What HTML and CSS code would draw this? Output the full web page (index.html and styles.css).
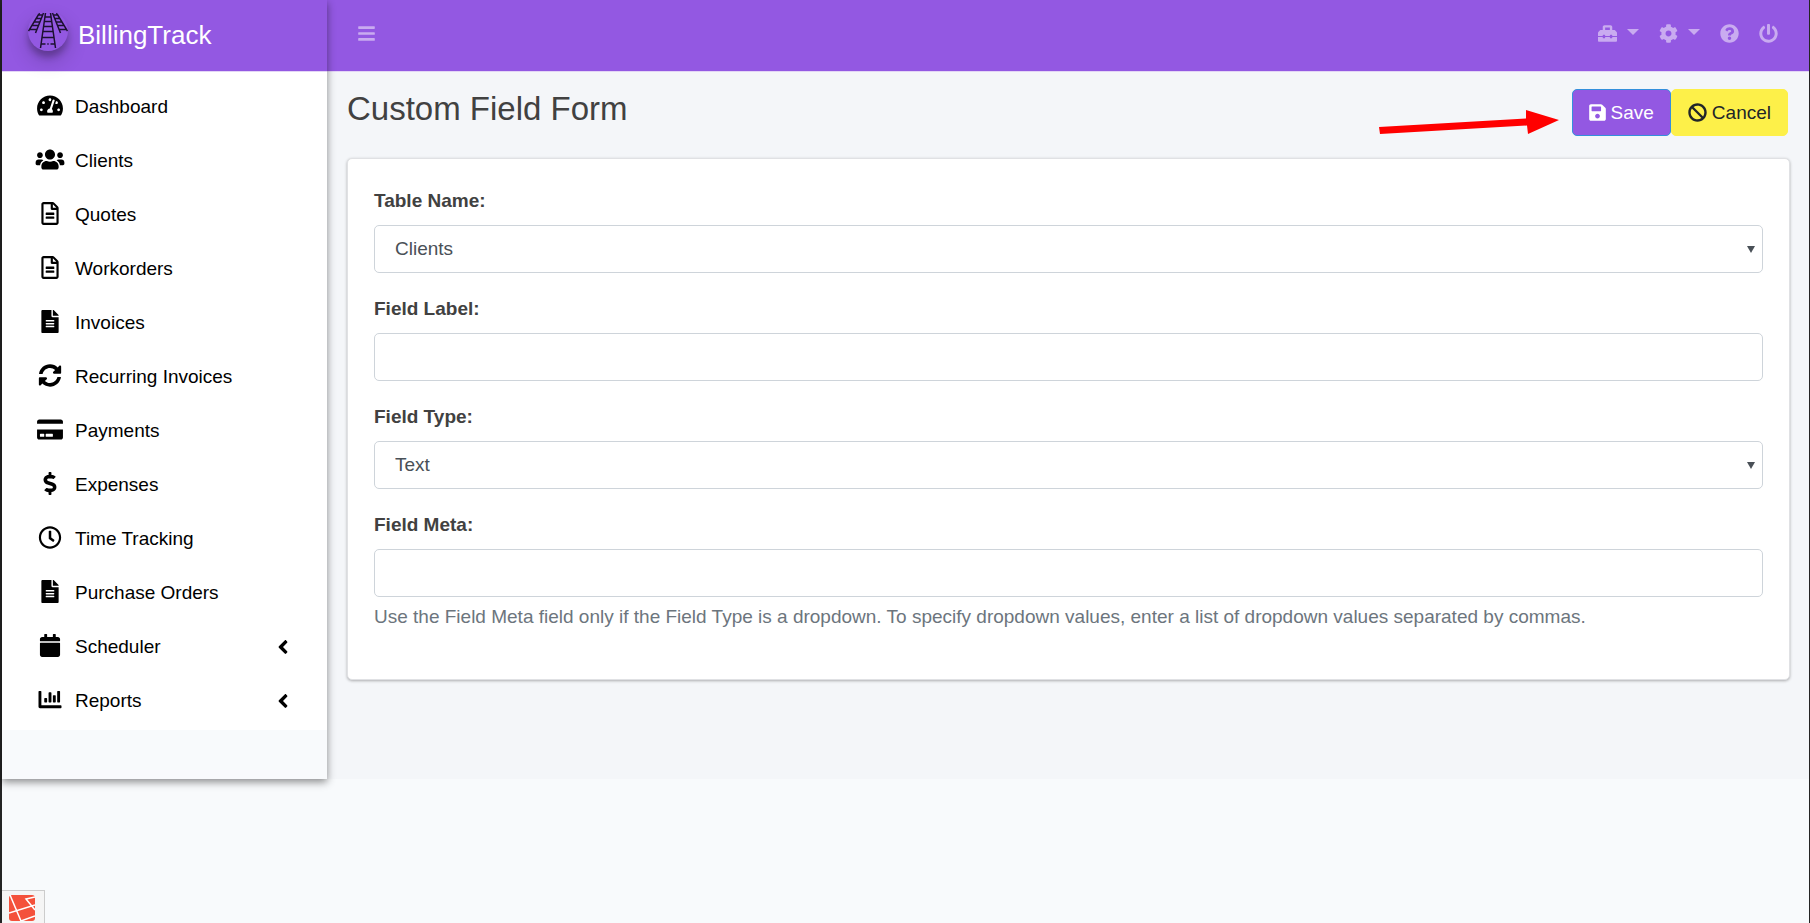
FILE: index.html
```
<!DOCTYPE html>
<html lang="en">
<head>
<meta charset="utf-8">
<meta name="viewport" content="width=device-width, initial-scale=1">
<title>BillingTrack - Custom Field Form</title>
<link rel="stylesheet" href="styles.css">
</head>
<body>
<svg class="sprite" aria-hidden="true">
  <symbol id="i-dash" viewBox="0 0 576 512"><path d="M288 32C128.94 32 0 160.94 0 320c0 52.8 14.25 102.26 39.06 144.8 5.61 9.62 16.3 15.2 27.44 15.2h443c11.14 0 21.83-5.58 27.44-15.2C561.75 422.26 576 372.8 576 320c0-159.06-128.94-288-288-288zm0 64c14.71 0 26.58 10.13 30.32 23.65-1.11 2.26-2.64 4.23-3.45 6.67l-9.22 27.67c-5.13 3.49-10.97 6.01-17.64 6.01-17.67 0-32-14.33-32-32S270.33 96 288 96zM96 384c-17.67 0-32-14.33-32-32s14.33-32 32-32 32 14.33 32 32-14.33 32-32 32zm48-160c-17.67 0-32-14.33-32-32s14.33-32 32-32 32 14.33 32 32-14.33 32-32 32zm246.77-72.41l-61.33 184C343.13 347.33 352 364.54 352 384c0 11.72-3.38 22.55-8.88 32H232.88c-5.5-9.45-8.88-20.28-8.88-32 0-33.94 26.5-61.43 59.9-63.59l61.34-184.01c4.17-12.56 17.73-19.45 30.36-15.17 12.57 4.19 19.35 17.79 15.17 30.36zm14.66 57.2l15.52-46.55c3.47-1.29 7.13-2.23 11.05-2.23 17.67 0 32 14.33 32 32s-14.33 32-32 32c-11.38-.01-20.89-6.28-26.57-15.22zM480 384c-17.67 0-32-14.33-32-32s14.33-32 32-32 32 14.33 32 32-14.33 32-32 32z"/></symbol>
  <symbol id="i-users" viewBox="0 0 640 512"><path d="M96 224c35.3 0 64-28.7 64-64s-28.7-64-64-64-64 28.7-64 64 28.7 64 64 64zm448 0c35.3 0 64-28.7 64-64s-28.7-64-64-64-64 28.7-64 64 28.7 64 64 64zm32 32h-64c-17.6 0-33.5 7.1-45.1 18.6 40.3 22.1 68.9 62 75.1 109.4h66c17.7 0 32-14.3 32-32v-32c0-35.3-28.7-64-64-64zm-256 0c61.9 0 112-50.1 112-112S381.9 32 320 32 208 82.1 208 144s50.1 112 112 112zm76.8 32h-8.3c-20.8 10-43.9 16-68.5 16s-47.6-6-68.5-16h-8.3C179.6 288 128 339.6 128 403.2V432c0 26.5 21.5 48 48 48h288c26.5 0 48-21.5 48-48v-28.8c0-63.6-51.6-115.2-115.2-115.2zm-223.7-13.4C161.5 263.1 145.6 256 128 256H64c-35.3 0-64 28.7-64 64v32c0 17.7 14.3 32 32 32h65.9c6.3-47.4 34.9-87.3 75.2-109.4z"/></symbol>
  <symbol id="i-file-o" viewBox="0 0 384 512"><path d="M288 248v28c0 6.6-5.4 12-12 12H108c-6.6 0-12-5.4-12-12v-28c0-6.6 5.4-12 12-12h168c6.6 0 12 5.4 12 12zm-12 72H108c-6.6 0-12 5.4-12 12v28c0 6.6 5.4 12 12 12h168c6.6 0 12-5.4 12-12v-28c0-6.6-5.4-12-12-12zm108-188.1V464c0 26.5-21.5 48-48 48H48c-26.5 0-48-21.5-48-48V48C0 21.5 21.5 0 48 0h204.1C264.8 0 277 5.1 286 14.1L369.9 98c9 8.9 14.1 21.2 14.1 33.9zm-128-80V128h76.1L256 51.9zM336 464V176H232c-13.3 0-24-10.7-24-24V48H48v416h288z"/></symbol>
  <symbol id="i-file" viewBox="0 0 384 512"><path d="M224 136V0H24C10.7 0 0 10.7 0 24v464c0 13.3 10.7 24 24 24h336c13.3 0 24-10.7 24-24V160H248c-13.2 0-24-10.8-24-24zm64 236c0 6.6-5.4 12-12 12H108c-6.6 0-12-5.4-12-12v-8c0-6.6 5.4-12 12-12h168c6.6 0 12 5.4 12 12v8zm0-64c0 6.6-5.4 12-12 12H108c-6.6 0-12-5.4-12-12v-8c0-6.6 5.4-12 12-12h168c6.6 0 12 5.4 12 12v8zm0-72v8c0 6.6-5.4 12-12 12H108c-6.6 0-12-5.4-12-12v-8c0-6.6 5.4-12 12-12h168c6.6 0 12 5.4 12 12zm96-114.1v6.1H256V0h6.1c6.4 0 12.5 2.5 17 7l97.9 98c4.5 4.5 7 10.6 7 16.9z"/></symbol>
  <symbol id="i-sync" viewBox="0 0 512 512"><path d="M370.72 133.28C339.458 104.008 298.888 87.962 255.848 88c-77.458.068-144.328 53.178-162.791 126.85-1.344 5.363-6.122 9.15-11.651 9.15H24.103c-7.498 0-13.194-6.807-11.807-14.176C33.933 94.924 134.813 8 256 8c66.448 0 126.791 26.136 171.315 68.685L463.03 40.97C478.149 25.851 504 36.559 504 57.941V192c0 13.255-10.745 24-24 24H345.941c-21.382 0-32.09-25.851-16.971-40.971l41.75-41.749zM32 296h134.059c21.382 0 32.09 25.851 16.971 40.971l-41.75 41.75c31.262 29.273 71.835 45.319 114.876 45.28 77.418-.07 144.315-53.144 162.787-126.849 1.344-5.363 6.122-9.15 11.651-9.15h57.304c7.498 0 13.194 6.807 11.807 14.176C478.067 417.076 377.187 504 256 504c-66.448 0-126.791-26.136-171.315-68.685L48.97 471.03C33.851 486.149 8 475.441 8 454.059V320c0-13.255 10.745-24 24-24z"/></symbol>
  <symbol id="i-card" viewBox="0 0 576 512"><path d="M0 432c0 26.5 21.5 48 48 48h480c26.5 0 48-21.5 48-48V256H0v176zm192-68c0-6.6 5.4-12 12-12h136c6.6 0 12 5.4 12 12v40c0 6.6-5.4 12-12 12H204c-6.6 0-12-5.4-12-12v-40zm-128 0c0-6.6 5.4-12 12-12h72c6.6 0 12 5.4 12 12v40c0 6.6-5.4 12-12 12H76c-6.6 0-12-5.4-12-12v-40zM576 80v48H0V80c0-26.5 21.5-48 48-48h480c26.5 0 48 21.5 48 48z"/></symbol>
  <symbol id="i-dollar" viewBox="0 0 288 512"><path d="M209.2 233.4l-108-31.6C88.7 198.2 80 186.5 80 173.5c0-16.3 13.2-29.5 29.5-29.5h66.3c12.2 0 24.2 3.7 34.2 10.5 6.1 4.1 14.3 3.1 19.5-2l34.8-34c7.1-6.9 6.1-18.4-1.8-24.5C238 74.8 207.4 64.1 176 64V16c0-8.8-7.2-16-16-16h-32c-8.8 0-16 7.2-16 16v48h-2.5C45.8 64-5.4 118.7.5 183.6c4.2 46.1 39.4 83.6 83.8 96.6l102.5 30c12.5 3.7 21.2 15.3 21.2 28.3 0 16.3-13.2 29.5-29.5 29.5h-66.3C100 368 88 364.3 78 357.5c-6.1-4.1-14.3-3.1-19.5 2l-34.8 34c-7.1 6.9-6.1 18.4 1.8 24.5 24.5 19.2 55.1 29.9 86.5 30v48c0 8.8 7.2 16 16 16h32c8.8 0 16-7.2 16-16v-48.2c46.6-.9 90.3-28.6 105.7-72.7 21.5-61.6-14.6-124.8-72.5-141.7z"/></symbol>
  <symbol id="i-clock" viewBox="0 0 512 512"><path d="M256 8C119 8 8 119 8 256s111 248 248 248 248-111 248-248S393 8 256 8zm0 448c-110.5 0-200-89.5-200-200S145.5 56 256 56s200 89.5 200 200-89.5 200-200 200zm61.8-104.4l-84.9-61.7c-3.1-2.3-4.9-5.9-4.9-9.7V116c0-6.6 5.4-12 12-12h32c6.6 0 12 5.4 12 12v141.7l66.8 48.6c5.4 3.9 6.5 11.4 2.6 16.8L334.6 349c-3.9 5.3-11.4 6.5-16.8 2.6z"/></symbol>
  <symbol id="i-cal" viewBox="0 0 448 512"><path d="M12 192h424c6.6 0 12 5.4 12 12v260c0 26.5-21.5 48-48 48H48c-26.5 0-48-21.5-48-48V204c0-6.6 5.4-12 12-12zm436-44v-36c0-26.5-21.5-48-48-48h-48V12c0-6.6-5.4-12-12-12h-40c-6.6 0-12 5.4-12 12v52H160V12c0-6.6-5.4-12-12-12h-40c-6.6 0-12 5.4-12 12v52H48C21.5 64 0 85.5 0 112v36c0 6.6 5.4 12 12 12h424c6.6 0 12-5.4 12-12z"/></symbol>
  <symbol id="i-chart" viewBox="0 0 512 512"><path d="M332.8 320h38.4c6.4 0 12.8-6.4 12.8-12.8V172.8c0-6.4-6.4-12.8-12.8-12.8h-38.4c-6.4 0-12.8 6.4-12.8 12.8v134.4c0 6.4 6.4 12.8 12.8 12.8zm96 0h38.4c6.4 0 12.8-6.4 12.8-12.8V76.8c0-6.4-6.4-12.8-12.8-12.8h-38.4c-6.4 0-12.8 6.4-12.8 12.8v230.4c0 6.4 6.4 12.8 12.8 12.8zm-288 0h38.4c6.4 0 12.8-6.4 12.8-12.8v-70.4c0-6.4-6.4-12.8-12.8-12.8h-38.4c-6.4 0-12.8 6.4-12.8 12.8v70.4c0 6.4 6.4 12.8 12.8 12.8zm96 0h38.4c6.4 0 12.8-6.4 12.8-12.8V108.8c0-6.4-6.4-12.8-12.8-12.8h-38.4c-6.4 0-12.8 6.4-12.8 12.8v198.4c0 6.4 6.4 12.8 12.8 12.8zM496 384H64V80c0-8.84-7.16-16-16-16H16C7.16 64 0 71.16 0 80v336c0 17.67 14.33 32 32 32h464c8.84 0 16-7.16 16-16v-32c0-8.84-7.16-16-16-16z"/></symbol>
  <symbol id="i-left" viewBox="0 0 256 512"><path d="M31.7 239l136-136c9.4-9.4 24.6-9.4 33.9 0l22.6 22.6c9.4 9.4 9.4 24.6 0 33.9L127.9 256l96.4 96.4c9.4 9.4 9.4 24.6 0 33.9L201.7 409c-9.4 9.4-24.6 9.4-33.9 0l-136-136c-9.5-9.4-9.5-24.6-.1-34z"/></symbol>
  <symbol id="i-bars" viewBox="0 0 448 512"><path d="M16 132h416c8.837 0 16-7.163 16-16V76c0-8.837-7.163-16-16-16H16C7.163 60 0 67.163 0 76v40c0 8.837 7.163 16 16 16zm0 160h416c8.837 0 16-7.163 16-16v-40c0-8.837-7.163-16-16-16H16c-8.837 0-16 7.163-16 16v40c0 8.837 7.163 16 16 16zm0 160h416c8.837 0 16-7.163 16-16v-40c0-8.837-7.163-16-16-16H16c-8.837 0-16 7.163-16 16v40c0 8.837 7.163 16 16 16z"/></symbol>
  <symbol id="i-toolbox" viewBox="0 0 512 512"><path d="M502.63 214.63l-45.25-45.25c-6-6-14.14-9.37-22.63-9.37H384V80c0-26.51-21.49-48-48-48H176c-26.51 0-48 21.49-48 48v80H77.25c-8.49 0-16.62 3.37-22.63 9.37L9.37 214.63c-6 6-9.37 14.14-9.37 22.63V320h128v-16c0-8.84 7.16-16 16-16h32c8.84 0 16 7.16 16 16v16h128v-16c0-8.84 7.16-16 16-16h32c8.84 0 16 7.16 16 16v16h128v-82.75c0-8.48-3.37-16.62-9.37-22.62zM320 160H192V96h128v64zm64 208c0 8.84-7.16 16-16 16h-32c-8.84 0-16-7.16-16-16v-16H192v16c0 8.84-7.16 16-16 16h-32c-8.84 0-16-7.16-16-16v-16H0v96c0 17.67 14.33 32 32 32h448c17.67 0 32-14.33 32-32v-96H384v16z"/></symbol>
  <symbol id="i-cog" viewBox="0 0 512 512"><path d="M487.4 315.7l-42.6-24.6c4.3-23.2 4.3-47 0-70.2l42.6-24.6c4.9-2.8 7.1-8.6 5.5-14-11.1-35.6-30-67.8-54.7-94.6-3.8-4.1-10-5.1-14.8-2.3L380.8 110c-17.9-15.4-38.5-27.3-60.8-35.1V25.8c0-5.6-3.9-10.5-9.4-11.7-36.7-8.2-74.3-7.8-109.2 0-5.5 1.2-9.4 6.1-9.4 11.7V75c-22.2 7.9-42.8 19.8-60.8 35.1L88.7 85.5c-4.9-2.8-11-1.9-14.8 2.3-24.7 26.7-43.6 58.9-54.7 94.6-1.7 5.4.6 11.2 5.5 14L67.3 221c-4.3 23.2-4.3 47 0 70.2l-42.6 24.6c-4.9 2.8-7.1 8.6-5.5 14 11.1 35.6 30 67.8 54.7 94.6 3.8 4.1 10 5.1 14.8 2.3l42.6-24.6c17.9 15.4 38.5 27.3 60.8 35.1v49.2c0 5.6 3.9 10.5 9.4 11.7 36.7 8.2 74.3 7.8 109.2 0 5.5-1.2 9.4-6.1 9.4-11.7v-49.2c22.2-7.9 42.8-19.8 60.8-35.1l42.6 24.6c4.9 2.8 11 1.9 14.8-2.3 24.7-26.7 43.6-58.9 54.7-94.6 1.5-5.5-.7-11.3-5.6-14.1zM256 336c-44.1 0-80-35.9-80-80s35.9-80 80-80 80 35.9 80 80-35.9 80-80 80z"/></symbol>
  <symbol id="i-help" viewBox="0 0 512 512"><path d="M504 256c0 136.997-111.043 248-248 248S8 392.997 8 256C8 119.083 119.043 8 256 8s248 111.083 248 248zM262.655 90c-54.497 0-89.255 22.957-116.549 63.758-3.536 5.286-2.353 12.415 2.715 16.258l34.699 26.31c5.205 3.947 12.621 3.008 16.665-2.122 17.864-22.658 30.113-35.797 57.303-35.797 20.429 0 45.698 13.148 45.698 32.958 0 14.976-12.363 22.667-32.534 33.976C247.128 238.528 216 254.941 216 296v4c0 6.627 5.373 12 12 12h56c6.627 0 12-5.373 12-12v-1.333c0-28.462 83.186-29.647 83.186-106.667 0-58.002-60.165-102-116.531-102zM256 338c-25.365 0-46 20.635-46 46 0 25.364 20.635 46 46 46s46-20.636 46-46c0-25.365-20.635-46-46-46z"/></symbol>
  <symbol id="i-power" viewBox="0 0 512 512"><path d="M400 54.1c63 45 104 118.6 104 201.9 0 136.8-110.8 247.7-247.5 248C120 504.3 8.2 393 8 256.4 7.9 173.1 48.9 99.3 111.8 54.2c11.7-8.3 28-4.8 35 7.7L162.6 90c5.9 10.5 3.1 23.8-6.6 31-41.5 30.8-68 79.6-68 134.9-.1 92.3 74.5 168.1 168 168.1 91.6 0 168.6-74.2 168-169.1-.3-51.8-24.7-101.8-68.1-134-9.7-7.2-12.4-20.5-6.5-30.9l15.8-28.1c7-12.4 23.2-16.1 34.8-7.8zM296 264V24c0-13.3-10.7-24-24-24h-32c-13.3 0-24 10.7-24 24v240c0 13.3 10.7 24 24 24h32c13.3 0 24-10.7 24-24z"/></symbol>
  <symbol id="i-save" viewBox="0 0 448 512"><path d="M433.941 129.941l-83.882-83.882A48 48 0 0 0 316.118 32H48C21.49 32 0 53.49 0 80v352c0 26.51 21.49 48 48 48h352c26.51 0 48-21.49 48-48V163.882a48 48 0 0 0-14.059-33.941zM224 416c-35.346 0-64-28.654-64-64 0-35.346 28.654-64 64-64s64 28.654 64 64c0 35.346-28.654 64-64 64zm96-304.52V212c0 6.627-5.373 12-12 12H76c-6.627 0-12-5.373-12-12V108c0-6.627 5.373-12 12-12h228.52c3.183 0 6.235 1.264 8.485 3.515l3.48 3.48A11.996 11.996 0 0 1 320 111.48z"/></symbol>
  <symbol id="i-ban" viewBox="0 0 512 512"><path d="M256 8C119.034 8 8 119.033 8 256s111.034 248 248 248 248-111.034 248-248S392.967 8 256 8zm130.108 117.892c65.448 65.448 70 165.481 20.677 235.637L150.47 105.216c70.204-49.356 170.226-44.735 235.638 20.676zM125.892 386.108c-65.448-65.448-70-165.481-20.677-235.637L361.53 406.784c-70.203 49.356-170.226 44.736-235.638-20.676z"/></symbol>
</svg>

<div class="frame">
  <div class="wrapper">
    <aside class="sidebar">
      <a class="brand" href="#">
        <svg class="brand-logo" viewBox="0 0 40 40" aria-hidden="true">
          <g fill="none" stroke="#1c1030" stroke-width="1.5">
            <path d="M17.5 2L12.5 37M22.5 2l5 35M17 6h6M16.5 10.500h7M16 15.500h8M15.500 20.500h9M14.500 26.500h11"/>
            <path d="M13 33h4.500M19.300 33h1.400M22.500 33H27"/>
            <path d="M11.500 2L.5 20M15.500 2L7.500 22M10.500 4h4.500M8.500 7.500h5M6.500 11h5.500M4 14.500h6.500M1.500 18.500h7.500"/>
            <path d="M28.500 2l11 18M24.500 2l8 20M25 4h4.500M26.500 7.500h5M28 11h5.500M29.500 14.500H36M31 18.500h7.500"/>
          </g>
        </svg>
        <span>BillingTrack</span>
      </a>
      <nav class="menu">
        <a class="menu-item" href="#"><svg class="menu-icon"><use href="#i-dash"/></svg><span>Dashboard</span></a>
        <a class="menu-item" href="#"><svg class="menu-icon"><use href="#i-users"/></svg><span>Clients</span></a>
        <a class="menu-item" href="#"><svg class="menu-icon"><use href="#i-file-o"/></svg><span>Quotes</span></a>
        <a class="menu-item" href="#"><svg class="menu-icon"><use href="#i-file-o"/></svg><span>Workorders</span></a>
        <a class="menu-item" href="#"><svg class="menu-icon"><use href="#i-file"/></svg><span>Invoices</span></a>
        <a class="menu-item" href="#"><svg class="menu-icon"><use href="#i-sync"/></svg><span>Recurring Invoices</span></a>
        <a class="menu-item" href="#"><svg class="menu-icon"><use href="#i-card"/></svg><span>Payments</span></a>
        <a class="menu-item" href="#"><svg class="menu-icon"><use href="#i-dollar"/></svg><span>Expenses</span></a>
        <a class="menu-item" href="#"><svg class="menu-icon"><use href="#i-clock"/></svg><span>Time Tracking</span></a>
        <a class="menu-item" href="#"><svg class="menu-icon"><use href="#i-file"/></svg><span>Purchase Orders</span></a>
        <a class="menu-item" href="#"><svg class="menu-icon"><use href="#i-cal"/></svg><span>Scheduler</span><svg class="menu-arrow"><use href="#i-left"/></svg></a>
        <a class="menu-item" href="#"><svg class="menu-icon"><use href="#i-chart"/></svg><span>Reports</span><svg class="menu-arrow"><use href="#i-left"/></svg></a>
      </nav>
    </aside>

    <div class="main">
      <header class="topbar">
        <button class="top-btn" type="button" aria-label="Toggle menu"><svg class="icon icon-narrow"><use href="#i-bars"/></svg></button>
        <div class="top-links">
          <button class="top-btn" type="button" aria-label="Tools"><svg class="icon"><use href="#i-toolbox"/></svg><span class="caret"></span></button>
          <button class="top-btn" type="button" aria-label="Settings"><svg class="icon"><use href="#i-cog"/></svg><span class="caret"></span></button>
          <a class="top-btn" href="#" aria-label="Help"><svg class="icon"><use href="#i-help"/></svg></a>
          <a class="top-btn" href="#" aria-label="Log out"><svg class="icon"><use href="#i-power"/></svg></a>
        </div>
      </header>

      <form class="content">
        <div class="page-head">
          <h1 class="title">Custom Field Form</h1>
          <div class="actions">
            <svg class="pointer" viewBox="0 0 180 24" aria-hidden="true"><path fill="#f00" d="M0 17L147 8.500V0L180 10l-31 14-1-8.500L1 24z"/></svg>
            <button class="btn btn-save" type="button"><svg class="icon icon-narrow"><use href="#i-save"/></svg><span>Save</span></button>
            <button class="btn btn-cancel" type="button"><svg class="icon"><use href="#i-ban"/></svg><span>Cancel</span></button>
          </div>
        </div>

        <section class="card">
          <div class="field">
            <label class="label" for="table-name">Table Name:</label>
            <div class="select-wrap"><select class="control" id="table-name"><option>Clients</option></select></div>
          </div>
          <div class="field">
            <label class="label" for="field-label">Field Label:</label>
            <input class="control" id="field-label" type="text">
          </div>
          <div class="field">
            <label class="label" for="field-type">Field Type:</label>
            <div class="select-wrap"><select class="control" id="field-type"><option>Text</option></select></div>
          </div>
          <div class="field">
            <label class="label" for="field-meta">Field Meta:</label>
            <input class="control" id="field-meta" type="text" aria-describedby="meta-help">
            <p class="help" id="meta-help">Use the Field Meta field only if the Field Type is a dropdown. To specify dropdown values, enter a list of dropdown values separated by commas.</p>
          </div>
        </section>
      </form>
    </div>
  </div>

  <button class="debugbar" type="button" aria-label="Open debug bar">
    <svg class="debugbar-logo" viewBox="0 0 26 26" aria-hidden="true">
      <rect width="26" height="26" rx="3" fill="#f4513b"/>
      <path fill="none" stroke="#fff" stroke-width="1.500" d="M1 0l11 26M0 18l26-8M26 2l-9 2 9 11M12 26l14-5"/>
    </svg>
  </button>
</div>
</body>
</html>
```
FILE: styles.css
```
* {
  box-sizing: border-box;
}

body {
  margin: 0;
  background: #f8fafc;
  color: #414141;
  font-family: "Liberation Sans", Arial, sans-serif;
  font-size: 19px;
  line-height: 28px;
}

button,
input,
select {
  font: inherit;
}

a {
  color: inherit;
  text-decoration: none;
}

.sprite {
  display: none;
}

.frame {
  min-height: 100vh;
  border-left: 2px solid #242424;
  border-right: 1px solid #242424;
}

.wrapper {
  display: flex;
  background: #f4f6f9;
}

/* Sidebar */

.sidebar {
  position: relative;
  z-index: 1;
  flex: none;
  width: 325px;
  padding-bottom: 49px;
  background: #f8fafc;
  box-shadow: 0 3px 8px rgba(0, 0, 0, 0.45);
}

.brand {
  display: flex;
  align-items: center;
  gap: 10px;
  height: 72px;
  padding: 0 26px 2px;
  border-bottom: 1px solid #e3d5f6;
  background: #9358e2;
  color: #fff;
  font-size: 26px;
}

.brand-logo {
  width: 40px;
  height: 40px;
  margin-bottom: 8px;
  border-radius: 50%;
  background: #9358e2;
  box-shadow: 0 10px 20px rgba(0, 0, 0, 0.19), 0 6px 6px rgba(0, 0, 0, 0.23);
}

.menu {
  padding: 8px 0 2px;
  background: #fff;
}

.menu-item {
  display: flex;
  align-items: center;
  gap: 10px;
  height: 54px;
  padding: 0 38px 0 33px;
  color: #000;
}

.menu-icon {
  width: 30px;
  height: 23px;
  margin-bottom: 4px;
}

.menu-arrow {
  width: 12px;
  height: 22px;
  margin-left: auto;
}

/* Main column */

.main {
  flex: 1;
  min-width: 0;
}

.topbar {
  display: flex;
  justify-content: space-between;
  align-items: center;
  height: 72px;
  padding: 0 31px 5px;
  border-bottom: 1px solid #e3d5f6;
  background: #9358e2;
}

.top-links {
  display: flex;
  gap: 20px;
}

.top-btn {
  display: flex;
  align-items: center;
  gap: 10px;
  padding: 0;
  border: 0;
  background: none;
  color: #c9abf0;
}

.icon {
  width: 19px;
  height: 19px;
  fill: currentColor;
}

.icon-narrow {
  width: 17px;
}

.caret {
  margin-bottom: 2px;
  border: 6px solid transparent;
  border-top-color: currentColor;
  border-bottom: 0;
}

.content {
  padding: 17px 19px 17px 20px;
}

.page-head {
  display: flex;
  justify-content: space-between;
  align-items: flex-start;
  margin-bottom: 22px;
  padding: 0 2px 0 0;
}

.title {
  margin: 0;
  font-size: 33px;
  font-weight: 400;
  line-height: 40px;
}

.actions {
  position: relative;
  display: flex;
}

.pointer {
  position: absolute;
  top: 21px;
  right: calc(100% + 13px);
  width: 180px;
  height: 24px;
}

.btn {
  display: flex;
  align-items: center;
  gap: 5px;
  height: 47px;
  padding: 0 16px;
  border: 1px solid;
  border-radius: 5px;
}

.btn-save {
  border-color: #3490dc;
  background: #9358e2;
  color: #fff;
}

.btn-cancel {
  border-color: #fdf049;
  background: #fdf049;
  color: #212529;
}

.card {
  padding: 28px 26px 48px;
  border: 1px solid #e0e1e4;
  border-radius: 5px;
  background: #fff;
  box-shadow: 0 1px 3px rgba(0, 0, 0, 0.3);
}

.field + .field {
  margin-top: 22px;
}

.label {
  display: block;
  margin-bottom: 10px;
  font-weight: 700;
}

.control {
  display: block;
  width: 100%;
  height: 48px;
  padding: 0 20px;
  border: 1px solid #ced4da;
  border-radius: 5px;
  background: #fff;
  color: #495057;
  appearance: none;
}

.select-wrap {
  position: relative;
}

.select-wrap::after {
  content: "";
  position: absolute;
  top: 21px;
  right: 8px;
  border: 4px solid transparent;
  border-top: 7px solid #495057;
  border-bottom: 0;
  pointer-events: none;
}

.help {
  margin: 6px 0 0;
  color: #6c757d;
}

.debugbar {
  position: fixed;
  bottom: 0;
  left: 2px;
  height: 33px;
  padding: 4px 9px 2px 7px;
  border: 1px solid #ccc;
  border-width: 1px 1px 0 0;
  background: #f5f5f5;
}

.debugbar-logo {
  display: block;
  width: 26px;
  height: 26px;
}
```
